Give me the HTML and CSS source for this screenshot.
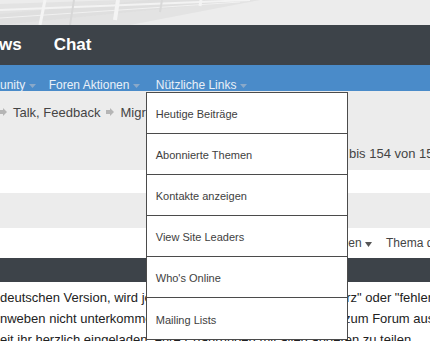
FILE: index.html
```html
<!DOCTYPE html>
<html lang="de">
<head>
  <meta charset="UTF-8" />
  <meta name="viewport" content="width=device-width, initial-scale=1.0" />
  <title>Forum</title>
  <link rel="stylesheet" href="styles.css">
</head>
<body>
  <div class="kopf">
    <svg class="kopf-muster" width="430" height="25" viewBox="0 0 430 25">
      <polygon points="0,25 0,4 120,0 260,0 130,25" fill="#e3e3e3" />
      <polygon points="0,25 0,14 150,0 250,0" fill="#dcdcdc" opacity="0.6" />
      <line x1="0" y1="10" x2="250" y2="0" stroke="#f3f3f3" stroke-width="2" />
      <line x1="0" y1="18" x2="240" y2="2" stroke="#f1f1f1" stroke-width="1" />
      <line x1="40" y1="25" x2="45" y2="0" stroke="#f4f4f4" stroke-width="3" />
      <line x1="70" y1="25" x2="74" y2="0" stroke="#d8d8d8" stroke-width="2" />
      <line x1="115" y1="20" x2="118" y2="0" stroke="#f4f4f4" stroke-width="4" />
      <line x1="160" y1="12" x2="162" y2="0" stroke="#d9d9d9" stroke-width="2" />
      <line x1="200" y1="6" x2="201" y2="0" stroke="#f4f4f4" stroke-width="3" />
    </svg>
  </div>

  <nav class="hauptnav">
    <a href="#" class="hauptnav-link abgeschnitten">ws</a>
    <a href="#" class="hauptnav-link">Chat</a>
  </nav>

  <nav class="subnav">
    <span class="sub-item">unity <svg class="pfeil" width="7" height="4" viewBox="0 0 7 4"><polygon points="0,0 7,0 3.5,4" /></svg></span>
    <span class="sub-item">Foren Aktionen <svg class="pfeil" width="7" height="4" viewBox="0 0 7 4"><polygon points="0,0 7,0 3.5,4" /></svg></span>
    <span class="sub-item offen">Nützliche Links <svg class="pfeil" width="7" height="4" viewBox="0 0 7 4"><polygon points="0,0 7,0 3.5,4" /></svg>
      <ul class="dropdown">
        <li><a href="#">Heutige Beiträge</a></li>
        <li><a href="#">Abonnierte Themen</a></li>
        <li><a href="#">Kontakte anzeigen</a></li>
        <li><a href="#">View Site Leaders</a></li>
        <li><a href="#">Who's Online</a></li>
        <li><a href="#">Mailing Lists</a></li>
      </ul>
    </span>
  </nav>

  <div class="grau-bereich">
    <div class="breadcrumb">
      <svg class="bc-pfeil" width="8" height="8" viewBox="0 0 8 8"><polygon points="0,2 4,2 4,0 8,4 4,8 4,6 0,6" /></svg>
      <span>Talk, Feedback</span>
      <svg class="bc-pfeil" width="8" height="8" viewBox="0 0 8 8"><polygon points="0,2 4,2 4,0 8,4 4,8 4,6 0,6" /></svg>
      <span>Migration</span>
    </div>
    <div class="seiten">bis 154 von 154</div>
  </div>

  <div class="weiss-streifen"></div>
  <div class="grau-streifen"></div>

  <div class="sortierung">
    <span class="sort-item sort-erster">Optionen <svg class="sort-pfeil" width="7" height="5" viewBox="0 0 7 5"><polygon points="0,0 7,0 3.5,5" /></svg></span>
    <span class="sort-item">Thema durchsuchen</span>
  </div>

  <div class="dunkel-leiste"></div>

  <div class="hinweis">
    <p> deutschen Version, wird jedes Thema ja automatisch als "kurz" oder "fehlerhaft" markiert</p>
    <p>nweben nicht unterkommen, bitte Schreibt da Eure Fragen, zum Forum aus</p>
    <p>eit ihr herzlich eingeladen, eure Erfahrungen mit allen anderen zu teilen</p>
  </div>
</body>
</html>
```

FILE: styles.css
```css
body {
  margin: 0;
  width: 430px;
  height: 341px;
  overflow: hidden;
  font-family: "Liberation Sans", Arial, sans-serif;
  background-color: #ffffff;
  color: #3a3a3a;
}
.kopf {
  height: 25px;
  background-color: #ececec;
  overflow: hidden;
}
.kopf-muster {
  display: block;
}
.hauptnav {
  height: 40px;
  background-color: #3d4349;
  display: flex;
  align-items: center;
  gap: 32px;
}
.hauptnav-link {
  color: #ffffff;
  font-size: 17px;
  font-weight: bold;
  text-decoration: none;
}
.abgeschnitten {
  margin-left: -1px;
}
.subnav {
  height: 26px;
  background-color: #4a8bc9;
  display: flex;
  align-items: flex-start;
  gap: 13px;
  padding-top: 12px;
  box-sizing: border-box;
}
.sub-item {
  position: relative;
  color: #e9f0f8;
  font-size: 12px;
  line-height: 16px;
  white-space: nowrap;
}
.offen {
  margin-left: 3px;
}
.pfeil {
  fill: #8aa9c9;
  vertical-align: middle;
}
.dropdown {
  position: absolute;
  left: -10px;
  top: 15px;
  width: 200px;
  margin: 0;
  padding: 0;
  list-style: none;
  background-color: #ffffff;
  border: 1px solid #4b4b4b;
  z-index: 5;
}
.dropdown li {
  height: 41px;
  border-bottom: 1px solid #4b4b4b;
  display: flex;
  align-items: center;
  padding-left: 9px;
  padding-top: 2px;
  box-sizing: border-box;
}
.dropdown li:last-child {
  border-bottom: none;
}
.dropdown a {
  color: #3e3e3e;
  font-size: 11px;
  text-decoration: none;
}
.grau-bereich {
  height: 79px;
  background-color: #ececec;
  font-size: 13px;
  color: #444444;
}
.breadcrumb {
  display: flex;
  align-items: center;
  gap: 6px;
  padding-top: 13px;
  height: 16px;
  margin-left: -1px;
  white-space: nowrap;
}
.bc-pfeil {
  fill: #b5b5b5;
}
.seiten {
  padding-top: 26px;
  padding-left: 349px;
  white-space: nowrap;
}
.weiss-streifen {
  height: 23px;
  background-color: #ffffff;
}
.grau-streifen {
  height: 35px;
  background-color: #ececec;
}
.sortierung {
  height: 30px;
  display: flex;
  align-items: center;
  gap: 14px;
  font-size: 12px;
  color: #444444;
  white-space: nowrap;
}
.sort-erster {
  flex-shrink: 0;
  width: 372px;
  text-align: right;
}
.sort-pfeil {
  fill: #555555;
}
.dunkel-leiste {
  height: 24px;
  background-color: #3d4349;
}
.hinweis {
  padding-top: 5px;
  font-size: 13px;
  color: #222222;
}
.hinweis p {
  margin: 0;
  line-height: 21px;
  white-space: nowrap;
}
```
